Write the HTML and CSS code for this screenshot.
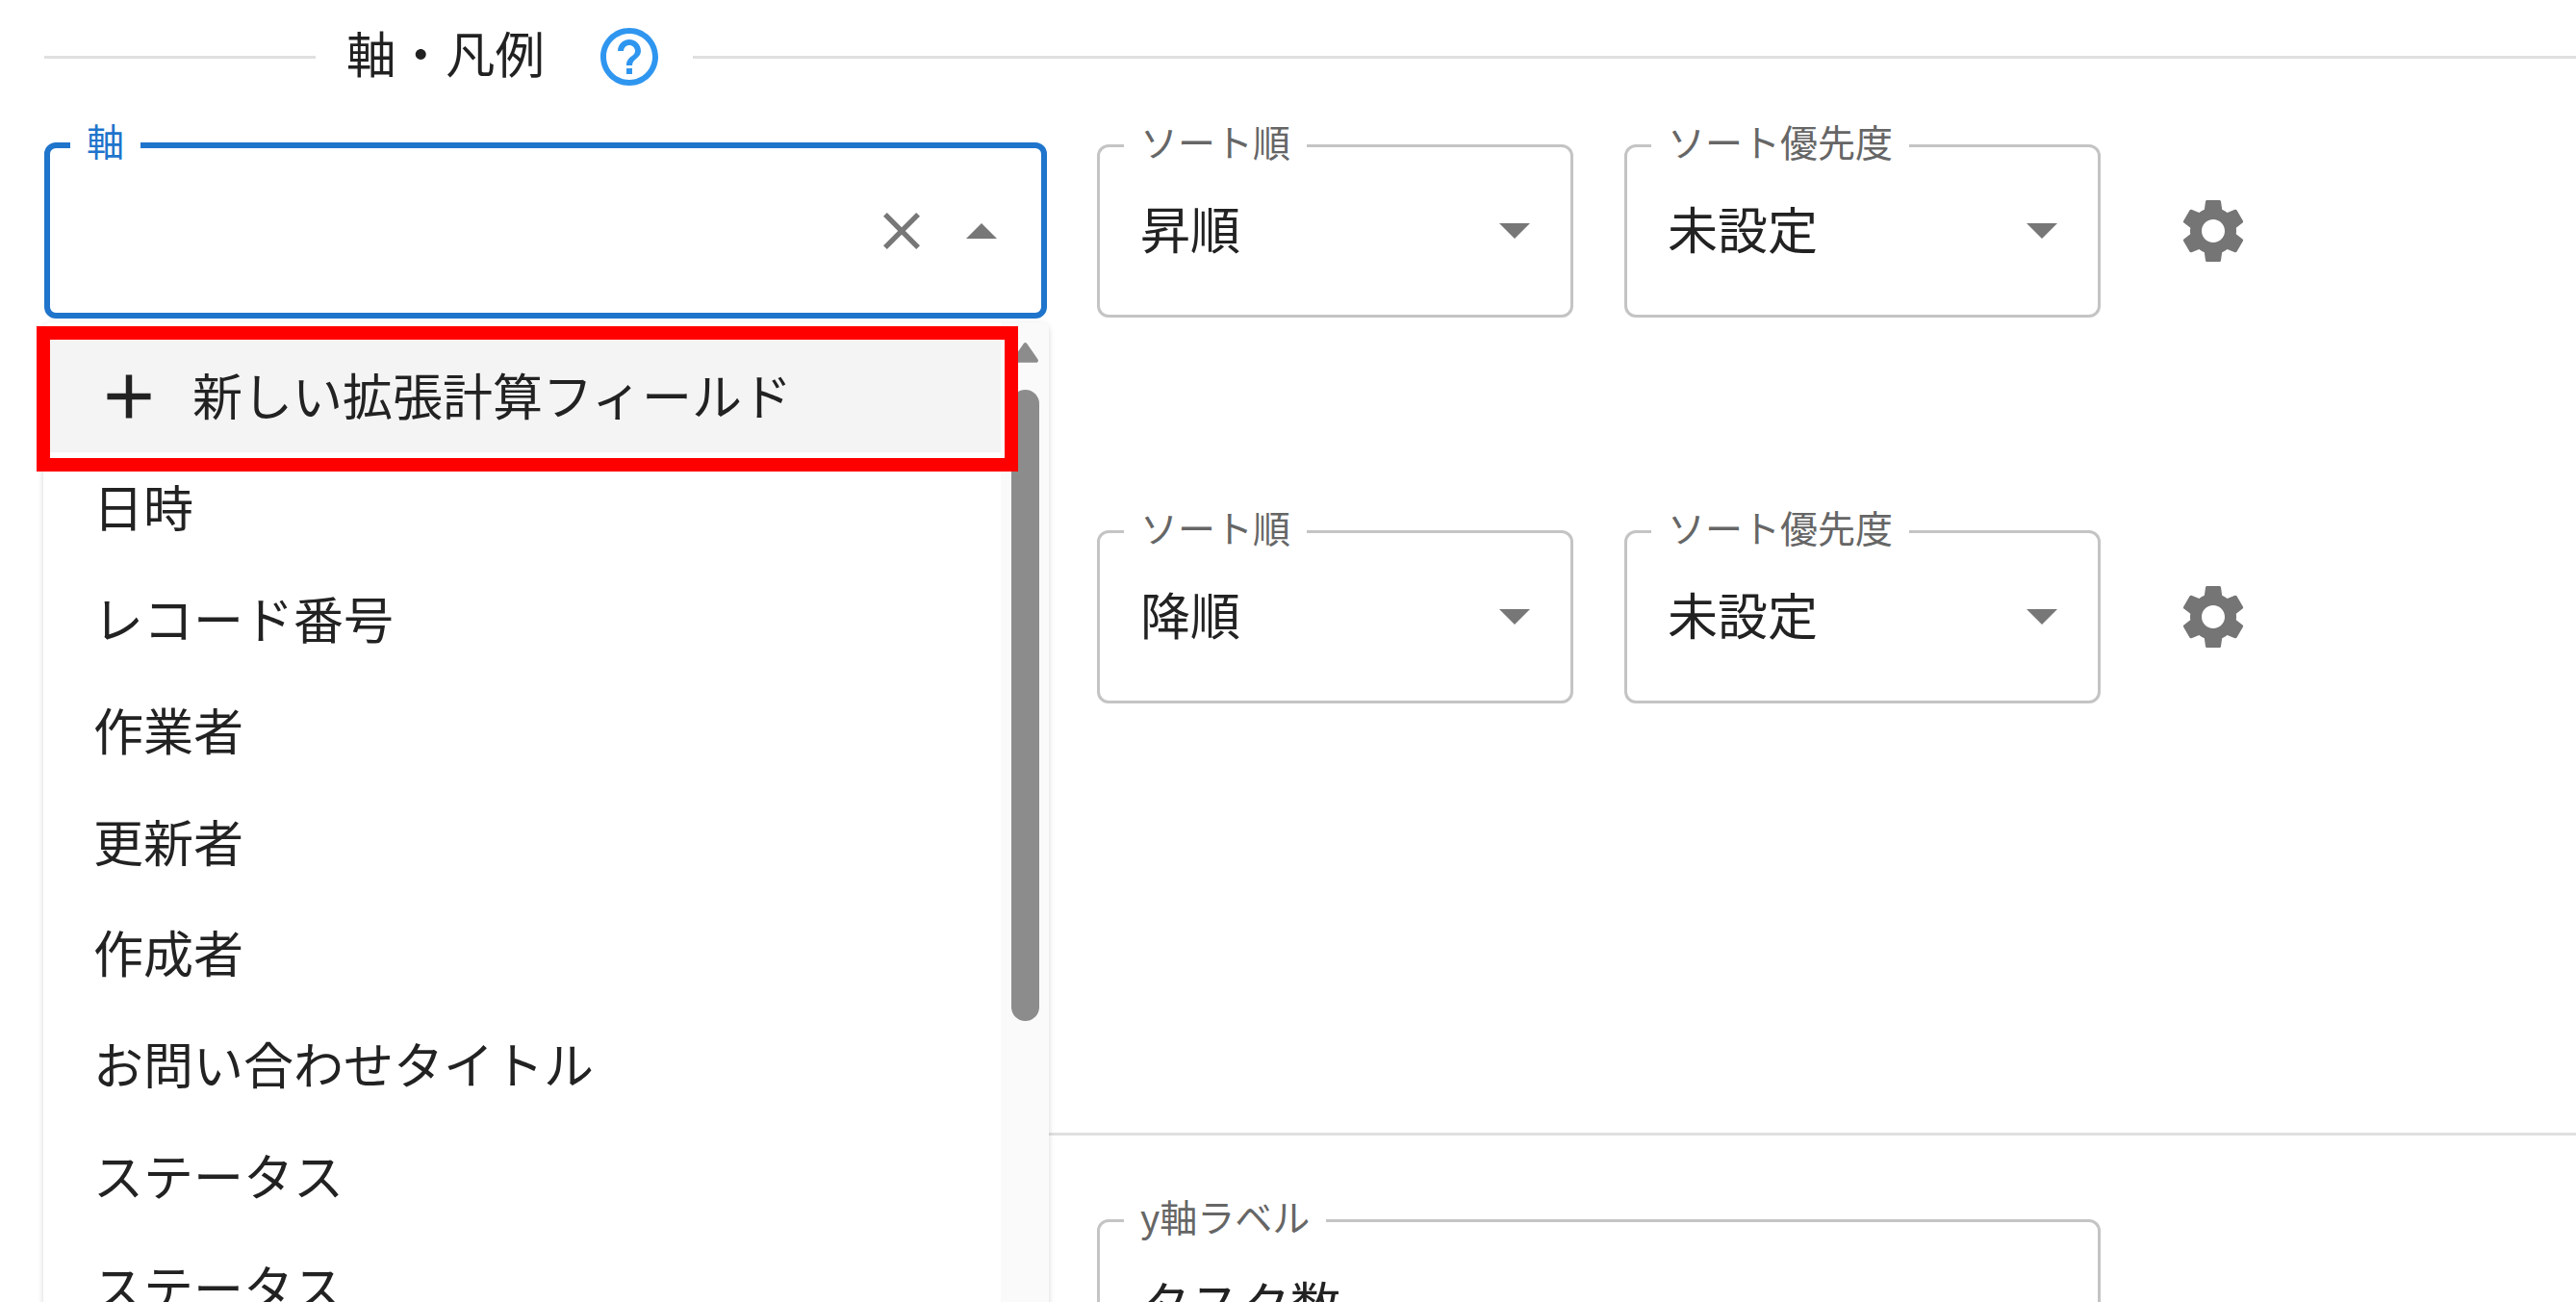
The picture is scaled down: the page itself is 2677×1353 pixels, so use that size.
FILE: index.html
```html
<!DOCTYPE html>
<html lang="ja">
<head>
<meta charset="utf-8">
<title>軸・凡例</title>
<link rel="stylesheet" href="styles.css">
</head>
<body>
<main class="panel">
  <header class="heading">
    <span class="rule rule-short"></span>
    <h2 class="title">軸・凡例</h2>
    <svg class="help" viewBox="0 0 24 24"><path d="M11 18h2v-2h-2v2zm1-16C6.48 2 2 6.48 2 12s4.48 10 10 10 10-4.48 10-10S17.52 2 12 2zm0 18c-4.41 0-8-3.59-8-8s3.59-8 8-8 8 3.59 8 8-3.59 8-8 8zm0-14c-2.21 0-4 1.79-4 4h2c0-1.1.9-2 2-2s2 .9 2 2c0 2-3 1.75-3 5h2c0-2.25 3-2.5 3-5 0-2.21-1.79-4-4-4z"/></svg>
    <span class="rule"></span>
  </header>

  <section class="row row-first">
    <div class="axis-cell">
      <div class="field field-focus">
        <span class="field-label label-focus">軸</span>
        <span class="adorn">
          <svg class="clear" viewBox="5 5 14 14"><path d="M19 6.41L17.59 5 12 10.59 6.41 5 5 6.41 10.59 12 5 17.59 6.41 19 12 13.41 17.59 19 19 17.59 13.41 12z"/></svg>
          <svg class="caret" viewBox="7 10 10 5"><path d="M7 15l5-5 5 5z"/></svg>
        </span>
      </div>
      <div class="menu">
        <ul class="options">
          <li class="option option-new">
            <svg class="plus" viewBox="0 0 24 24"><path d="M19 13h-6v6h-2v-6H5v-2h6V5h2v6h6v2z"/></svg>
            <span>新しい拡張計算フィールド</span>
          </li>
          <li class="option"><span>日時</span></li>
          <li class="option"><span>レコード番号</span></li>
          <li class="option"><span>作業者</span></li>
          <li class="option"><span>更新者</span></li>
          <li class="option"><span>作成者</span></li>
          <li class="option"><span>お問い合わせタイトル</span></li>
          <li class="option"><span>ステータス</span></li>
          <li class="option"><span>ステータス</span></li>
        </ul>
        <div class="scroll-track">
          <svg class="scroll-up" viewBox="0 0 28 22"><path d="M14 3L25 19H3z"/></svg>
          <div class="scroll-thumb"></div>
        </div>
        <div class="annotation"></div>
      </div>
    </div>
    <div class="field field-sm">
      <span class="field-label">ソート順</span>
      <span class="value">昇順</span>
      <svg class="caret-down" viewBox="7 10 10 5"><path d="M7 10l5 5 5-5z"/></svg>
    </div>
    <div class="field field-sm">
      <span class="field-label">ソート優先度</span>
      <span class="value">未設定</span>
      <svg class="caret-down" viewBox="7 10 10 5"><path d="M7 10l5 5 5-5z"/></svg>
    </div>
    <svg class="gear" viewBox="0 0 24 24"><path d="M19.14 12.94c.04-.3.06-.61.06-.94 0-.32-.02-.64-.07-.94l2.03-1.58c.18-.14.23-.41.12-.61l-1.92-3.32c-.12-.22-.37-.29-.59-.22l-2.39.96c-.5-.38-1.03-.7-1.62-.94l-.36-2.54c-.04-.24-.24-.41-.48-.41h-3.84c-.24 0-.43.17-.47.41l-.36 2.54c-.59.24-1.13.57-1.62.94l-2.39-.96c-.22-.08-.47 0-.59.22L2.74 8.87c-.12.21-.08.47.12.61l2.03 1.58c-.05.3-.09.63-.09.94s.02.64.07.94l-2.03 1.58c-.18.14-.23.41-.12.61l1.92 3.32c.12.22.37.29.59.22l2.39-.96c.5.38 1.03.7 1.62.94l.36 2.54c.05.24.24.41.48.41h3.84c.24 0 .44-.17.47-.41l.36-2.54c.59-.24 1.13-.56 1.62-.94l2.39.96c.22.08.47 0 .59-.22l1.92-3.32c.12-.22.07-.47-.12-.61l-2.01-1.58zM12 15.6c-1.98 0-3.6-1.62-3.6-3.6s1.62-3.6 3.6-3.6 3.6 1.62 3.6 3.6-1.62 3.6-3.6 3.6z"/></svg>
  </section>

  <section class="row row-second">
    <div class="axis-cell"></div>
    <div class="field field-sm">
      <span class="field-label">ソート順</span>
      <span class="value">降順</span>
      <svg class="caret-down" viewBox="7 10 10 5"><path d="M7 10l5 5 5-5z"/></svg>
    </div>
    <div class="field field-sm">
      <span class="field-label">ソート優先度</span>
      <span class="value">未設定</span>
      <svg class="caret-down" viewBox="7 10 10 5"><path d="M7 10l5 5 5-5z"/></svg>
    </div>
    <svg class="gear" viewBox="0 0 24 24"><path d="M19.14 12.94c.04-.3.06-.61.06-.94 0-.32-.02-.64-.07-.94l2.03-1.58c.18-.14.23-.41.12-.61l-1.92-3.32c-.12-.22-.37-.29-.59-.22l-2.39.96c-.5-.38-1.03-.7-1.62-.94l-.36-2.54c-.04-.24-.24-.41-.48-.41h-3.84c-.24 0-.43.17-.47.41l-.36 2.54c-.59.24-1.13.57-1.62.94l-2.39-.96c-.22-.08-.47 0-.59.22L2.74 8.87c-.12.21-.08.47.12.61l2.03 1.58c-.05.3-.09.63-.09.94s.02.64.07.94l-2.03 1.58c-.18.14-.23.41-.12.61l1.92 3.32c.12.22.37.29.59.22l2.39-.96c.5.38 1.03.7 1.62.94l.36 2.54c.05.24.24.41.48.41h3.84c.24 0 .44-.17.47-.41l.36-2.54c.59-.24 1.13-.56 1.62-.94l2.39.96c.22.08.47 0 .59-.22l1.92-3.32c.12-.22.07-.47-.12-.61l-2.01-1.58zM12 15.6c-1.98 0-3.6-1.62-3.6-3.6s1.62-3.6 3.6-3.6 3.6 1.62 3.6 3.6-1.62 3.6-3.6 3.6z"/></svg>
  </section>

  <hr class="divider">

  <section class="row row-third">
    <div class="axis-cell"></div>
    <div class="field field-wide">
      <span class="field-label">y軸ラベル</span>
      <span class="value">タスク数</span>
    </div>
  </section>
</main>
</body>
</html>
```

FILE: styles.css
```css
* { box-sizing: border-box; }

html, body {
  margin: 0;
  height: 1353px;
  overflow: hidden;
  background: #fff;
}

body {
  font-family: "Noto Sans CJK JP", "Noto Sans", sans-serif;
  color: rgba(0, 0, 0, 0.87);
}

.panel { padding-left: 46px; }

.heading {
  display: flex;
  align-items: center;
  height: 119px;
}

.rule {
  flex: 1;
  height: 3px;
  background: #e0e0e0;
}

.rule-short {
  flex: 0 0 282px;
}

.title {
  margin: 0 0 12px 32px;
  font-size: 51.5px;
  font-weight: 400;
  line-height: 1;
}

.help {
  width: 72px;
  height: 72px;
  margin: 0 30px 1px 52px;
  fill: #2f96f0;
}

.row {
  display: flex;
  align-items: center;
  height: 183px;
}

.row-first { margin-top: 29px; }
.row-second { margin-top: 218px; }
.row-third { margin-top: 85px; }

.axis-cell {
  position: relative;
  flex: 0 0 1042px;
  height: 183px;
  margin-right: 52px;
}

.field {
  position: relative;
  display: flex;
  align-items: center;
  background: #fff;
  border: 3px solid #c4c4c4;
  border-radius: 12px;
}

.field-focus {
  height: 183px;
  border: 6px solid #1f74cc;
}

.field-sm {
  flex: 0 0 495px;
  height: 180px;
  margin-right: 53px;
  padding-left: 42px;
}

.field-wide {
  flex: 0 0 1043px;
  height: 180px;
  padding-left: 42px;
}

.field-label {
  position: absolute;
  top: -29px;
  left: 25px;
  padding: 0 17px;
  background: #fff;
  color: #666;
  font-size: 39px;
  line-height: 44px;
}

.label-focus {
  left: 21px;
  top: -31px;
  color: #1f74cc;
}

.value {
  margin-bottom: 6px;
  font-size: 52px;
  line-height: 1;
  color: #222;
}

.adorn {
  margin-left: auto;
  display: flex;
  align-items: center;
}

.clear {
  width: 38px;
  height: 38px;
  margin-right: 48px;
  fill: #777;
}

.caret {
  width: 32px;
  height: 16px;
  margin-right: 46px;
  fill: #777;
}

.caret-down {
  width: 32px;
  height: 16px;
  margin-left: auto;
  margin-right: 42px;
  fill: #777;
}

.gear {
  flex: none;
  width: 80px;
  height: 80px;
  margin-left: 24px;
  fill: #757575;
}

.menu {
  position: absolute;
  z-index: 2;
  top: 187px;
  left: -1px;
  width: 1045px;
  height: 1040px;
  background: #fff;
  border-radius: 8px;
  box-shadow: 0 2px 6px rgba(0, 0, 0, 0.16);
}

.options {
  margin: 0;
  padding: 19px 0 0;
  list-style: none;
  height: 100%;
  overflow: hidden;
}

.option {
  display: flex;
  align-items: center;
  height: 115.8px;
  padding-left: 52px;
  font-size: 52px;
  color: #222;
}

.option span {
  margin-bottom: 3px;
  line-height: 1;
}

.option-new {
  background: #f4f4f4;
  padding-left: 66px;
}

.plus {
  width: 46px;
  height: 46px;
  margin-right: 43px;
  fill: #222;
  transform: scale(1.68);
}

.scroll-track {
  position: absolute;
  top: 0;
  right: 0;
  bottom: 0;
  width: 50px;
  padding: 20px 10px 0 11px;
  background: #fafafa;
  border-radius: 0 8px 0 0;
}

.scroll-up {
  display: block;
  width: 29px;
  height: 23px;
  fill: #8c8c8c;
  stroke: #8c8c8c;
  stroke-width: 4;
  stroke-linejoin: round;
}

.scroll-thumb {
  width: 29px;
  height: 656px;
  margin-top: 27px;
  background: #8c8c8c;
  border-radius: 15px;
}

.annotation {
  position: absolute;
  top: 4px;
  left: -7px;
  width: 1020px;
  height: 151px;
  border: 14px solid #f00;
}

.divider {
  margin: 445px 0 0;
  border: 0;
  height: 3px;
  background: #e0e0e0;
}
```
